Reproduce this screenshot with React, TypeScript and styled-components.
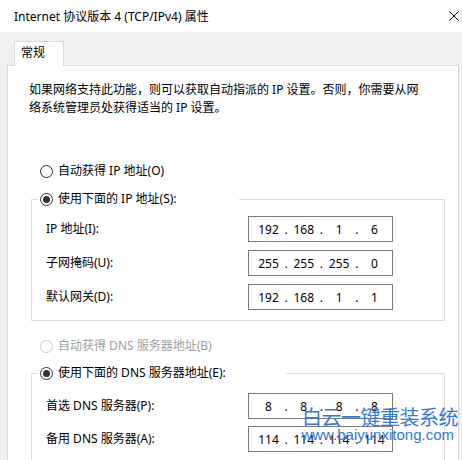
import React, { FC } from 'react';
import styled, { createGlobalStyle } from 'styled-components';

const uiFont = `"Noto Sans", "Noto Sans CJK SC", sans-serif`;

const GlobalStyle = createGlobalStyle`
  html, body {
    margin: 0;
    padding: 0;
    background: #f0f0f0;
  }
  body {
    font-family: ${uiFont};
    font-size: 12px;
    color: #000;
  }
`;

const Window = styled.div`
  position: relative;
  width: 462px;
  height: 460px;
  overflow: hidden;
  display: flex;
  flex-direction: column;
  background: #f0f0f0;
`;

const TitleBar = styled.header`
  flex: none;
  height: 32px;
  display: flex;
  align-items: center;
  justify-content: space-between;
  padding: 0 3px 0 14px;
  background: #fff;
`;

const Title = styled.span`
  font-size: 12px;
  line-height: 16px;
  padding-top: 1px;
`;

const CloseButton = styled.button`
  width: 10px;
  height: 10px;
  padding: 0;
  border: 0;
  background: none;
  display: flex;
`;

const Body = styled.div`
  flex: 1;
  min-height: 0;
  display: flex;
  flex-direction: column;
  padding: 9px 3px 0 7px;
`;

const TabStrip = styled.div`
  position: relative;
  z-index: 1;
  display: flex;
  padding-left: 7px;
  margin-bottom: -1px;
`;

const Tab = styled.div`
  box-sizing: border-box;
  width: 50px;
  height: 25px;
  padding-left: 6px;
  border: 1px solid #d9d9d9;
  border-bottom: none;
  background: #fff;
  font-size: 12px;
  line-height: 21px;
`;

const Panel = styled.section`
  flex: 1;
  background: #fff;
  border: 1px solid #d9d9d9;
  border-bottom: none;
  padding-top: 15px;
`;

const Intro = styled.p`
  margin: 0 0 0 21px;
  width: 396px;
  font-size: 12px;
  line-height: 18px;
`;

const Form = styled.div`
  display: flex;
  flex-direction: column;
  padding: 0 13px 0 23px;
`;

const RadioRow = styled.label<{ $gap: number; $disabled?: boolean }>`
  display: flex;
  align-items: center;
  gap: 5px;
  height: 18px;
  margin: ${(p) => p.$gap}px 0 0 9px;
  font-size: 12px;
  line-height: 18px;
  color: ${(p) => (p.$disabled ? '#a0a0a0' : '#000')};
`;

const RadioMark = styled.span<{ $checked?: boolean; $disabled?: boolean }>`
  box-sizing: border-box;
  flex: none;
  width: 13px;
  height: 13px;
  border-radius: 50%;
  border: 1px solid ${(p) => (p.$disabled ? '#c8c8c8' : '#333')};
  background: #fff;
  display: flex;
  align-items: center;
  justify-content: center;

  &::after {
    content: '';
    display: ${(p) => (p.$checked ? 'block' : 'none')};
    width: 7px;
    height: 7px;
    border-radius: 50%;
    background: #333;
  }
`;

const Group = styled.fieldset<{ $gap: number; $inset: number; $rowGap: number }>`
  margin: ${(p) => p.$gap}px 0 0;
  min-width: 0;
  border: 1px solid #dcdcdc;
  padding: ${(p) => p.$inset}px 51px 10px 14px;

  & > div {
    row-gap: ${(p) => p.$rowGap}px;
  }
`;

const GroupLegend = styled.legend<{ $width: number }>`
  box-sizing: border-box;
  width: ${(p) => p.$width}px;
  margin-left: -8px;
  padding: 0 2px;
  display: flex;
  align-items: center;
  gap: 5px;
  height: 18px;
  font-size: 12px;
  line-height: 18px;
`;

const FieldGrid = styled.div`
  display: grid;
  grid-template-columns: 1fr 145px;
  align-items: center;
`;

const FieldLabel = styled.span`
  font-size: 12px;
  line-height: 18px;
`;

const AddressBox = styled.div`
  box-sizing: border-box;
  height: 26px;
  display: flex;
  align-items: center;
  padding-left: 5px;
  border: 1px solid #7a7a7a;
  background: #fff;
  font-family: "Noto Sans", sans-serif;
  font-size: 12px;
`;

const Octet = styled.span`
  width: 29px;
  text-align: center;
`;

const Dot = styled.span`
  width: 6.3px;
  text-align: center;
`;

const Watermark = styled.div`
  position: absolute;
  right: 4px;
  top: 405px;
  display: flex;
  flex-direction: column;
  align-items: flex-end;
  color: #3577d4;
  pointer-events: none;
`;

const WatermarkName = styled.span`
  font-family: "Noto Sans CJK SC", sans-serif;
  font-size: 20px;
  line-height: 24px;
  letter-spacing: -0.5px;
`;

const WatermarkUrl = styled.span`
  margin: -3px 4px 0 0;
  font-family: "Liberation Sans", Arial, sans-serif;
  font-size: 15px;
  line-height: 18px;
`;

const AddressField: FC<{ value: string }> = ({ value }) => {
  const parts = value.split('.');
  return (
    <AddressBox>
      {parts.map((part, i) => (
        <React.Fragment key={i}>
          <Octet>{part}</Octet>
          {i < parts.length - 1 && <Dot>.</Dot>}
        </React.Fragment>
      ))}
    </AddressBox>
  );
};

const ipFields = [
  { label: 'IP 地址(I):', value: '192.168.1.6' },
  { label: '子网掩码(U):', value: '255.255.255.0' },
  { label: '默认网关(D):', value: '192.168.1.1' },
];

const dnsFields = [
  { label: '首选 DNS 服务器(P):', value: '8.8.8.8' },
  { label: '备用 DNS 服务器(A):', value: '114.114.114.114' },
];

const App: FC = () => (
  <Window>
    <GlobalStyle />
    <TitleBar>
      <Title>Internet 协议版本 4 (TCP/IPv4) 属性</Title>
      <CloseButton aria-label="关闭">
        <svg width="10" height="10" viewBox="0 0 10 10">
          <path d="M0.5 0.5 L9.5 9.5 M9.5 0.5 L0.5 9.5" stroke="#000" strokeWidth="1" fill="none" />
        </svg>
      </CloseButton>
    </TitleBar>
    <Body>
      <TabStrip>
        <Tab>常规</Tab>
      </TabStrip>
      <Panel>
        <Intro>
          如果网络支持此功能，则可以获取自动指派的 IP 设置。否则，你需要从网络系统管理员处获得适当的 IP 设置。
        </Intro>
        <Form>
          <RadioRow $gap={45}>
            <RadioMark />
            自动获得 IP 地址(O)
          </RadioRow>
          <Group $gap={10} $inset={8} $rowGap={8}>
            <GroupLegend $width={201}>
              <RadioMark $checked />
              使用下面的 IP 地址(S):
            </GroupLegend>
            <FieldGrid>
              {ipFields.map((f) => (
                <React.Fragment key={f.label}>
                  <FieldLabel>{f.label}</FieldLabel>
                  <AddressField value={f.value} />
                </React.Fragment>
              ))}
            </FieldGrid>
          </Group>
          <RadioRow $gap={16} $disabled>
            <RadioMark $disabled />
            自动获得 DNS 服务器地址(B)
          </RadioRow>
          <Group $gap={9} $inset={11} $rowGap={7}>
            <GroupLegend $width={248}>
              <RadioMark $checked />
              使用下面的 DNS 服务器地址(E):
            </GroupLegend>
            <FieldGrid>
              {dnsFields.map((f) => (
                <React.Fragment key={f.label}>
                  <FieldLabel>{f.label}</FieldLabel>
                  <AddressField value={f.value} />
                </React.Fragment>
              ))}
            </FieldGrid>
          </Group>
        </Form>
      </Panel>
    </Body>
    <Watermark>
      <WatermarkName>白云一键重装系统</WatermarkName>
      <WatermarkUrl>www.baiyunxitong.com</WatermarkUrl>
    </Watermark>
  </Window>
);

export default App;
